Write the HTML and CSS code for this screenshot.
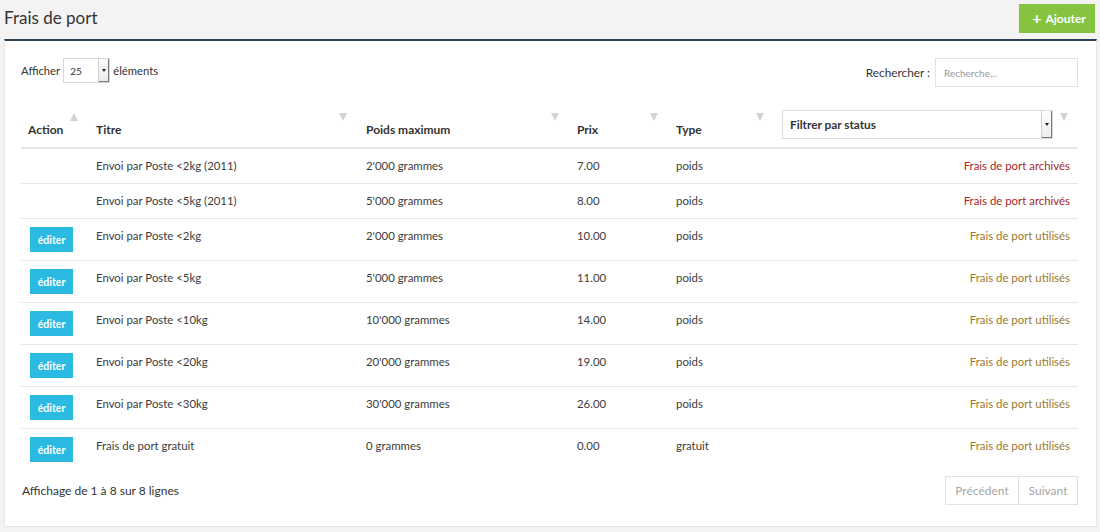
FILE: index.html
```html
<!DOCTYPE html>
<html lang="fr">
<head>
<meta charset="utf-8">
<title>Frais de port</title>
<link rel="stylesheet" href="styles.css">
</head>
<body>
<header class="page-head">
  <h1 class="page-title">Frais de port</h1>
  <button class="btn-add"><span class="plus">+</span> Ajouter</button>
</header>
<section class="panel">
  <div class="toolbar">
    <label class="length">Afficher
      <span class="select-small"><span class="sel-val">25</span><span class="sel-btn"><span class="caret"></span></span></span>
      éléments</label>
    <label class="search">Rechercher :
      <span class="search-input">Recherche...</span></label>
  </div>
  <table class="grid">
    <colgroup>
      <col class="c-action"><col class="c-titre"><col class="c-poids"><col class="c-prix"><col class="c-type"><col class="c-status">
    </colgroup>
    <thead>
      <tr>
        <th class="sort-up">Action</th>
        <th class="sort-down">Titre</th>
        <th class="sort-down">Poids maximum</th>
        <th class="sort-down">Prix</th>
        <th class="sort-down">Type</th>
        <th class="sort-down th-filter">
          <span class="select-filter"><span class="sel-val">Filtrer par status</span><span class="sel-btn"><span class="caret"></span></span></span>
        </th>
      </tr>
    </thead>
    <tbody>
      <tr><td></td><td>Envoi par Poste &lt;2kg (2011)</td><td>2'000 grammes</td><td>7.00</td><td>poids</td><td class="st archived">Frais de port archivés</td></tr>
      <tr><td></td><td>Envoi par Poste &lt;5kg (2011)</td><td>5'000 grammes</td><td>8.00</td><td>poids</td><td class="st archived">Frais de port archivés</td></tr>
      <tr><td><button class="btn-edit">éditer</button></td><td>Envoi par Poste &lt;2kg</td><td>2'000 grammes</td><td>10.00</td><td>poids</td><td class="st used">Frais de port utilisés</td></tr>
      <tr><td><button class="btn-edit">éditer</button></td><td>Envoi par Poste &lt;5kg</td><td>5'000 grammes</td><td>11.00</td><td>poids</td><td class="st used">Frais de port utilisés</td></tr>
      <tr><td><button class="btn-edit">éditer</button></td><td>Envoi par Poste &lt;10kg</td><td>10'000 grammes</td><td>14.00</td><td>poids</td><td class="st used">Frais de port utilisés</td></tr>
      <tr><td><button class="btn-edit">éditer</button></td><td>Envoi par Poste &lt;20kg</td><td>20'000 grammes</td><td>19.00</td><td>poids</td><td class="st used">Frais de port utilisés</td></tr>
      <tr><td><button class="btn-edit">éditer</button></td><td>Envoi par Poste &lt;30kg</td><td>30'000 grammes</td><td>26.00</td><td>poids</td><td class="st used">Frais de port utilisés</td></tr>
      <tr><td><button class="btn-edit">éditer</button></td><td>Frais de port gratuit</td><td>0 grammes</td><td>0.00</td><td>gratuit</td><td class="st used">Frais de port utilisés</td></tr>
    </tbody>
  </table>
  <div class="footer">
    <span class="info">Affichage de 1 à 8 sur 8 lignes</span>
    <div class="pager"><span class="pg">Précédent</span><span class="pg">Suivant</span></div>
  </div>
</section>
</body>
</html>
```
FILE: styles.css
```css
* { box-sizing: border-box; }
html, body { margin: 0; padding: 0; }
body {
  background: #f3f3f4;
  font-family: "Lato", "Open Sans", sans-serif;
  font-size: 12px;
  color: #3c3c3c;
  width: 1100px;
  height: 532px;
  overflow: hidden;
}
.page-head {
  height: 39px;
  display: flex;
  align-items: flex-start;
  justify-content: space-between;
  padding: 4px 5px 0 4px;
}
.page-title {
  margin: 2px 0 0;
  font-size: 17px;
  font-weight: 400;
  color: #333;
  line-height: 24px;
}
.btn-add {
  width: 76px;
  height: 29px;
  border: 0;
  background: #86c440;
  color: #fff;
  font-family: inherit;
  font-size: 12px;
  font-weight: 700;
  padding: 0 0 0 4px;
  display: flex;
  align-items: center;
  justify-content: center;
  gap: 4px;
}
.btn-add .plus { font-size: 16px; line-height: 1; margin-top: -2px; }
.panel {
  margin: 0 3px 0 4px;
  height: 488px;
  background: #fff;
  border: 1px solid #e4e6e8;
  border-top: 2px solid #2f4050;
  padding: 17px 18px 0 16px;
}
.toolbar {
  display: flex;
  justify-content: space-between;
  align-items: flex-start;
  height: 43px;
}
.length {
  display: flex;
  align-items: center;
  gap: 3px;
  height: 25px;
  font-size: 11.3px;
  color: #333;
}
.select-small {
  display: inline-flex;
  width: 47px;
  height: 25px;
  border: 1px solid #d8d8d8;
  background: #fff;
  align-items: stretch;
}
.sel-val { flex: 1; padding-left: 6px; display: flex; align-items: center; font-size: 10px; color: #333; }
.sel-btn {
  width: 11px;
  border-left: 1px solid #cfcfcf;
  background: linear-gradient(#fdfdfd, #ececec);
  box-shadow: inset -1px -1px 0 #777;
  display: flex;
  align-items: center;
  justify-content: center;
}
.caret {
  width: 0; height: 0;
  border-left: 2.5px solid transparent;
  border-right: 2.5px solid transparent;
  border-top: 3px solid #222;
}
.search {
  display: flex;
  align-items: center;
  gap: 5px;
  font-size: 11.8px;
  color: #333;
}
.search-input {
  width: 143px;
  height: 29px;
  border: 1px solid #e2e2e2;
  font-size: 10px;
  color: #999;
  padding-left: 8px;
  display: flex;
  align-items: center;
}
.grid {
  width: 1057px;
  border-collapse: collapse;
  table-layout: fixed;
  margin-left: 0;
}
.c-action { width: 67px; }
.c-titre { width: 270px; }
.c-poids { width: 211px; }
.c-prix { width: 99px; }
.c-type { width: 106px; }
.c-status { width: 304px; }
.grid th {
  position: relative;
  text-align: left;
  font-weight: 700;
  font-size: 12px;
  color: #333;
  vertical-align: bottom;
  padding: 10px 8px 8px;
  height: 47px;
  border-bottom: 2px solid #e7e7e7;
  line-height: 18px;
}
.grid th:first-child { padding-left: 7px; }
.grid th.sort-up::after,
.grid th.sort-down::after {
  content: "";
  position: absolute;
  top: 12px;
  right: 10px;
  width: 0; height: 0;
  border-left: 4px solid transparent;
  border-right: 4px solid transparent;
}
.grid th.sort-up::after { border-bottom: 8px solid #d3d3d3; }
.grid th.sort-down::after { border-top: 8px solid #d3d3d3; }
.grid th:nth-child(2)::after { right: 11px; }
.grid th.th-filter { padding: 0 26px 8px 8px; }
.select-filter {
  display: flex;
  width: 271px;
  height: 29px;
  border: 1px solid #dcdcdc;
  background: #fff;
}
.select-filter .sel-val { font-size: 11.8px; font-weight: 700; padding-left: 7px; }
.select-filter .sel-btn { width: 11px; }
.grid td {
  border-top: 1px solid #e7e7e7;
  padding: 8px 8px 8px;
  line-height: 18px;
  height: 35px;
  font-size: 11.4px;
  color: #3c3c3c;
  vertical-align: top;
  white-space: nowrap;
}
.grid tbody tr:first-child td { border-top: 0; }
.grid td:first-child { padding-left: 9px; }
.grid td.st { text-align: right; }
.st.archived { color: #a8262a; }
.st.used { color: #9b7a2b; }
.btn-edit {
  width: 43px;
  height: 25px;
  border: 0;
  padding: 0;
  background: #2bbae2;
  color: #fff;
  font-family: inherit;
  font-size: 10.5px;
  font-weight: 700;
  display: block;
}
.footer {
  display: flex;
  justify-content: space-between;
  align-items: center;
  margin-top: 6px;
  height: 29px;
}
.info { font-size: 12px; color: #333; margin-left: 1px; }
.pager { display: flex; }
.pg {
  height: 29px;
  border: 1px solid #e2e2e2;
  color: #a6a6a6;
  font-size: 12px;
  display: flex;
  align-items: center;
  justify-content: center;
}
.pg:first-child { width: 74px; }
.pg:last-child { width: 59px; border-left: 0; }
```
